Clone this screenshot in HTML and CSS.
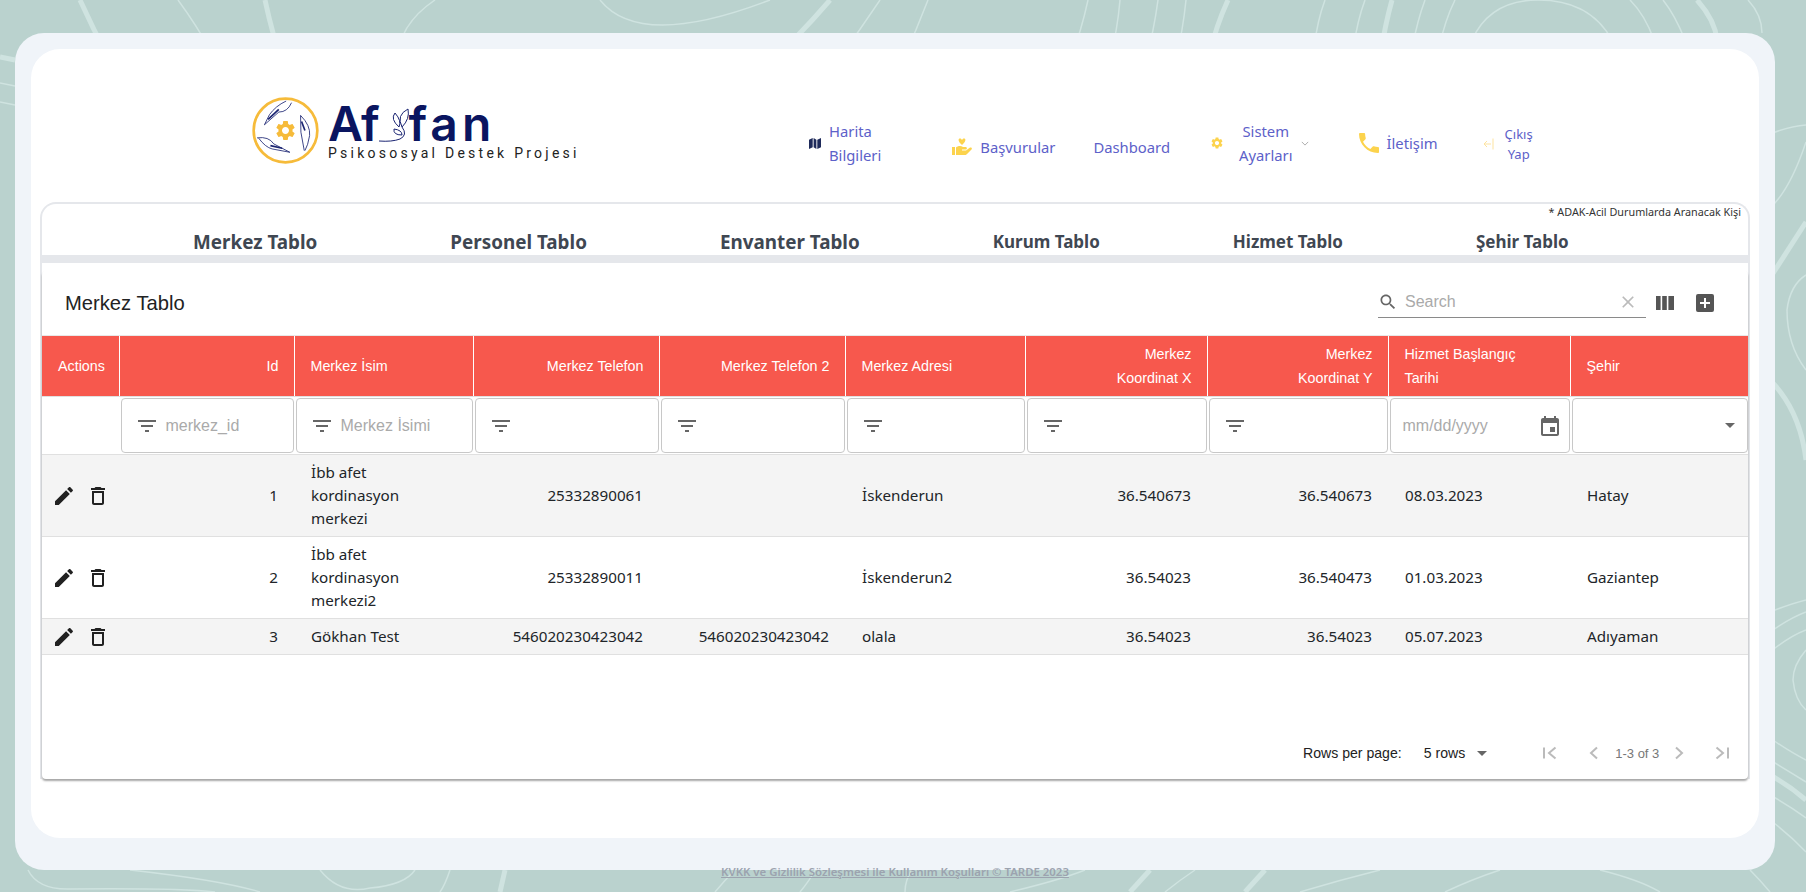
FILE: index.html
```html
<!DOCTYPE html>
<html lang="tr">
<head>
    <meta charset="UTF-8">
    <meta name="viewport" content="width=device-width, initial-scale=1.0">
    <title>Affan - Merkez Tablo</title>
    <link rel="stylesheet" href="styles.css">
</head>
<body>
    <!-- Arka plan çizgileri -->
    <svg class="bg-lines" viewBox="0 0 1806 892" aria-hidden="true">
        <g class="thin">
            <path d="M178 0 Q215 50 238 110"/>
            <path d="M435 0 Q398 25 398 60 Q402 100 440 115"/>
            <path d="M600 0 Q640 50 770 0"/>
            <path d="M795 115 Q840 60 880 0"/>
            <path d="M875 115 Q905 60 928 0"/>
            <path d="M1045 115 Q1075 60 1088 0"/>
            <path d="M1090 115 Q1115 60 1120 0"/>
            <path d="M1127 115 Q1150 60 1158 0"/>
            <path d="M1158 115 Q1180 60 1186 0"/>
            <path d="M1310 115 Q1310 40 1325 0"/>
            <path d="M1348 115 Q1350 40 1365 0"/>
            <path d="M1403 115 Q1410 40 1425 0"/>
            <path d="M1430 115 Q1435 40 1455 0"/>
            <path d="M1472 40 Q1490 0 1538 0 Q1590 0 1612 40"/>
            <path d="M1654 40 Q1645 15 1630 0"/>
            <path d="M1685 40 Q1675 15 1663 0"/>
            <path d="M1762 33 Q1762 15 1748 0"/>
            <path d="M1770 134 Q1790 126 1806 125"/>
            <path d="M1770 208 Q1790 190 1806 142"/>
            <path d="M1806 370 Q1787 345 1787 310 Q1790 285 1806 275"/>
            <path d="M1770 612 Q1790 604 1806 600"/>
            <path d="M1770 632 Q1790 618 1806 612"/>
            <path d="M1770 652 Q1790 636 1806 630"/>
            <path d="M1806 650 Q1793 665 1793 680 Q1795 700 1806 710"/>
            <path d="M1770 738 Q1790 752 1806 760"/>
            <path d="M1770 760 Q1790 772 1806 782"/>
            <path d="M1770 795 Q1790 806 1806 818"/>
            <path d="M1770 820 Q1790 835 1806 852"/>
            <path d="M0 83 L15 86"/>
            <path d="M0 102 L15 105"/>
            <path d="M28 870 Q38 890 70 889 Q180 888 215 892"/>
            <path d="M130 870 Q220 880 260 892"/>
            <path d="M320 870 Q340 895 370 888 Q405 885 415 870"/>
            <path d="M450 870 Q445 885 440 892"/>
            <path d="M715 892 Q725 880 735 870"/>
            <path d="M800 892 Q810 880 815 870"/>
            <path d="M905 892 Q905 880 912 870"/>
            <path d="M1010 892 Q1060 880 1085 870"/>
            <path d="M1165 892 Q1180 880 1195 870"/>
            <path d="M1300 892 Q1340 880 1380 870"/>
            <path d="M1445 892 Q1470 880 1500 870"/>
            <path d="M1600 870 Q1640 880 1660 892"/>
            <path d="M1750 870 Q1760 880 1770 892"/>
        </g>
        <g class="thick">
            <path d="M80 0 Q105 55 140 115"/>
            <path d="M265 0 Q280 70 305 115"/>
            <path d="M830 0 Q770 70 705 115"/>
            <path d="M1228 0 Q1205 50 1200 115"/>
            <path d="M1392 0 Q1378 50 1375 115"/>
            <path d="M1697 0 Q1715 20 1717 40"/>
            <path d="M1770 278 L1806 222"/>
            <path d="M1770 380 Q1800 410 1806 460"/>
            <path d="M1770 775 Q1790 786 1806 800"/>
            <path d="M0 57 L15 60"/>
            <path d="M505 870 L500 892"/>
            <path d="M1130 892 L1150 870"/>
            <path d="M1245 892 L1265 870"/>
        </g>
    </svg>

    <div class="panel">
        <div class="inner">
            <header class="top">
                <div class="logo">
                    <svg class="logo-mark" viewBox="20 25 200 200" aria-hidden="true">
                        <circle cx="120" cy="125" r="95" fill="none" stroke="#f6bb3a" stroke-width="8"/>
                        <g fill="none" stroke="#1a2472" stroke-width="2.5">
                            <path d="M57 108 L72 78 Q90 52 122 37"/>
                            <path d="M57 108 L100 70 Q126 70 138 42"/>
                            <path d="M68 92 L100 62" stroke-width="5"/>
                            <path d="M165 80 Q195 110 192 140 Q187 170 178 185"/>
                            <path d="M165 80 L166 130 L176 185"/>
                            <path d="M168 98 L178 125" stroke-width="5"/>
                            <path d="M35 147 Q70 142 85 165 L133 190"/>
                            <path d="M40 148 Q60 175 80 180 L133 190"/>
                            <path d="M75 170 L110 178" stroke-width="5"/>
                        </g>
                        <svg x="85" y="90" width="70" height="70" viewBox="0 0 24 24">
                            <path class="gear" d="M19.14 12.94c.04-.3.06-.61.06-.94 0-.32-.02-.64-.07-.94l2.03-1.58c.18-.14.23-.41.12-.61l-1.92-3.32c-.12-.22-.37-.29-.59-.22l-2.39.96c-.5-.38-1.03-.7-1.62-.94l-.36-2.54c-.04-.24-.24-.41-.48-.41h-3.84c-.24 0-.43.17-.47.41l-.36 2.54c-.59.24-1.13.57-1.62.94l-2.39-.96c-.22-.08-.47 0-.59.22L2.74 8.87c-.12.21-.08.47.12.61l2.03 1.58c-.05.3-.09.63-.09.94s.02.64.07.94l-2.03 1.58c-.18.14-.23.41-.12.61l1.92 3.32c.12.22.37.29.59.22l2.39-.96c.5.38 1.03.7 1.62.94l.36 2.54c.05.24.24.41.48.41h3.84c.24 0 .44-.17.47-.41l.36-2.54c.59-.24 1.13-.56 1.62-.94l2.39.96c.22.08.47 0 .59-.22l1.92-3.32c.12-.22.07-.47-.12-.61l-2.01-1.58zM12 15.6c-1.98 0-3.6-1.62-3.6-3.6s1.62-3.6 3.6-3.6 3.6 1.62 3.6 3.6-1.62 3.6-3.6 3.6z"/>
                        </svg>
                    </svg>
                    <div class="logo-text">
                        <div class="logo-name"><span class="logo-a">A</span><span class="logo-gap">f</span>fan
                            <svg class="logo-sprout" viewBox="0 0 50 40" aria-hidden="true">
                                <g fill="none" stroke="#1a2472" stroke-width="1">
                                    <path d="M30 6 Q18 12 24 24 Q32 16 30 6Z"/>
                                    <path d="M17 10 Q12 16 21 24 Q24 18 17 10Z"/>
                                    <path d="M16 26 Q15 32 24 32 Q24 27 16 26Z"/>
                                    <path d="M24 24 Q30 32 22 36 Q14 39 1 38"/>
                                </g>
                            </svg>
                        </div>
                        <div class="logo-sub">Psikososyal Destek Projesi</div>
                    </div>
                </div>
                <nav class="nav">
                    <a class="nav-item nav-map">
                        <svg class="ico-map" viewBox="0 0 13 14"><path d="M0 3 L4 1 V11 L0 13Z M5 1 L8 3 V13 L5 11Z M9 3 L13 1 V11 L9 13Z"/></svg>
                        <span>Harita<br>Bilgileri</span>
                    </a>
                    <a class="nav-item single nav-apply">
                        <svg class="ico-hand" viewBox="0 0 20 18"><path d="M9 6 C6 3 6 0.5 8 0.5 C9 0.5 9.6 1.2 10 2 C10.4 1.2 11 0.5 12 0.5 C14 0.5 14 3 11 6 L10 7Z"/><path d="M0 9 H3 V17 H0Z M4 9.5 C6 7.5 9 7.5 11 9 H14 C15.5 9.5 15 11.5 13.5 11.5 H10 V12.5 H14 L18 9.5 C19.5 9 20.5 10.5 19.5 11.5 L15 16 C14.5 17 13 17 12 17 H4Z"/></svg>
                        <span>Başvurular</span>
                    </a>
                    <a class="nav-item single">Dashboard</a>
                    <a class="nav-item nav-system">
                        <svg class="ico-gear" viewBox="0 0 24 24"><path d="M19.14 12.94c.04-.3.06-.61.06-.94 0-.32-.02-.64-.07-.94l2.03-1.58c.18-.14.23-.41.12-.61l-1.92-3.32c-.12-.22-.37-.29-.59-.22l-2.39.96c-.5-.38-1.03-.7-1.62-.94l-.36-2.54c-.04-.24-.24-.41-.48-.41h-3.84c-.24 0-.43.17-.47.41l-.36 2.54c-.59.24-1.13.57-1.62.94l-2.39-.96c-.22-.08-.47 0-.59.22L2.74 8.87c-.12.21-.08.47.12.61l2.03 1.58c-.05.3-.09.63-.09.94s.02.64.07.94l-2.03 1.58c-.18.14-.23.41-.12.61l1.92 3.32c.12.22.37.29.59.22l2.39-.96c.5.38 1.03.7 1.62.94l.36 2.54c.05.24.24.41.48.41h3.84c.24 0 .44-.17.47-.41l.36-2.54c.59-.24 1.13-.56 1.62-.94l2.39.96c.22.08.47 0 .59-.22l1.92-3.32c.12-.22.07-.47-.12-.61l-2.01-1.58zM12 15.6c-1.98 0-3.6-1.62-3.6-3.6s1.62-3.6 3.6-3.6 3.6 1.62 3.6 3.6-1.62 3.6-3.6 3.6z"/></svg>
                        <span class="center">Sistem<br>Ayarları</span>
                        <svg class="ico-chevron" viewBox="0 0 10 6"><path d="M1 1 L5 5 L9 1"/></svg>
                    </a>
                    <a class="nav-item nav-contact">
                        <svg class="ico-phone" viewBox="3 3 18 18"><path d="M6.62 10.79c1.44 2.83 3.76 5.14 6.59 6.59l2.2-2.2c.27-.27.67-.36 1.02-.24 1.12.37 2.33.57 3.57.57.55 0 1 .45 1 1V20c0 .55-.45 1-1 1-9.39 0-17-7.61-17-17 0-.55.45-1 1-1h3.5c.55 0 1 .45 1 1 0 1.25.2 2.45.57 3.57.11.35.03.74-.25 1.02l-2.2 2.2z"/></svg>
                        <span>İletişim</span>
                    </a>
                    <a class="nav-item nav-exit">
                        <svg class="ico-exit" viewBox="0 0 11 12"><path d="M10 0.5 V11.5 M8 6 H1 M4 3 L1 6 L4 9"/></svg>
                        <span class="center">Çıkış<br>Yap</span>
                    </a>
                </nav>
            </header>

            <section class="card">
                <div class="note">* ADAK-Acil Durumlarda Aranacak Kişi</div>
                <div class="tabs">
                    <a class="tab">Merkez Tablo</a>
                    <a class="tab">Personel Tablo</a>
                    <a class="tab">Envanter Tablo</a>
                    <a class="tab tab-small">Kurum Tablo</a>
                    <a class="tab tab-small">Hizmet Tablo</a>
                    <a class="tab tab-small">Şehir Tablo</a>
                </div>
                <div class="tabs-bar"></div>

                <div class="paper">
                    <div class="toolbar">
                        <h2 class="toolbar-title">Merkez Tablo</h2>
                        <div class="search">
                            <svg class="ico-search" viewBox="0 0 24 24"><path d="M15.5 14h-.79l-.28-.27C15.41 12.59 16 11.11 16 9.5 16 5.91 13.09 3 9.5 3S3 5.91 3 9.5 5.91 16 9.5 16c1.61 0 3.09-.59 4.23-1.57l.27.28v.79l5 4.99L20.49 19l-4.99-5zm-6 0C7.01 14 5 11.99 5 9.5S7.01 5 9.5 5 14 7.01 14 9.5 11.99 14 9.5 14z"/></svg>
                            <span class="search-text">Search</span>
                            <svg class="ico-clear" viewBox="0 0 24 24"><path d="M19 6.41L17.59 5 12 10.59 6.41 5 5 6.41 10.59 12 5 17.59 6.41 19 12 13.41 17.59 19 19 17.59 13.41 12z"/></svg>
                        </div>
                        <svg class="ico-columns" viewBox="0 0 18 14"><path d="M0 0h4.6v14H0zM6.2 0h4.6v14H6.2zM12.4 0H18v14h-5.6z"/></svg>
                        <svg class="ico-add" viewBox="0 0 18 18"><path fill-rule="evenodd" d="M2 0h14a2 2 0 0 1 2 2v14a2 2 0 0 1-2 2H2a2 2 0 0 1-2-2V2a2 2 0 0 1 2-2zM8 4v4H4v2h4v4h2v-4h4V8h-4V4z"/></svg>
                    </div>

                    <table class="grid">
                        <colgroup>
                            <col class="c-actions"><col class="c-id"><col class="c-name"><col class="c-tel"><col class="c-tel">
                            <col class="c-addr"><col class="c-x"><col class="c-y"><col class="c-date"><col>
                        </colgroup>
                        <thead>
                            <tr class="head-row">
                                <th>Actions</th>
                                <th class="num">Id</th>
                                <th>Merkez İsim</th>
                                <th class="num">Merkez Telefon</th>
                                <th class="num">Merkez Telefon 2</th>
                                <th>Merkez Adresi</th>
                                <th class="num">Merkez<br>Koordinat X</th>
                                <th class="num">Merkez<br>Koordinat Y</th>
                                <th>Hizmet Başlangıç<br>Tarihi</th>
                                <th>Şehir</th>
                            </tr>
                            <tr class="filter-row">
                                <td></td>
                                <td><div class="filter"><svg class="ico-filter" viewBox="0 0 18 12"><path d="M0 0h18v2H0zM3 5h12v2H3zM7 10h4v2H7z"/></svg><span>merkez_id</span></div></td>
                                <td><div class="filter"><svg class="ico-filter" viewBox="0 0 18 12"><path d="M0 0h18v2H0zM3 5h12v2H3zM7 10h4v2H7z"/></svg><span>Merkez İsimi</span></div></td>
                                <td><div class="filter"><svg class="ico-filter" viewBox="0 0 18 12"><path d="M0 0h18v2H0zM3 5h12v2H3zM7 10h4v2H7z"/></svg></div></td>
                                <td><div class="filter"><svg class="ico-filter" viewBox="0 0 18 12"><path d="M0 0h18v2H0zM3 5h12v2H3zM7 10h4v2H7z"/></svg></div></td>
                                <td><div class="filter"><svg class="ico-filter" viewBox="0 0 18 12"><path d="M0 0h18v2H0zM3 5h12v2H3zM7 10h4v2H7z"/></svg></div></td>
                                <td><div class="filter"><svg class="ico-filter" viewBox="0 0 18 12"><path d="M0 0h18v2H0zM3 5h12v2H3zM7 10h4v2H7z"/></svg></div></td>
                                <td><div class="filter"><svg class="ico-filter" viewBox="0 0 18 12"><path d="M0 0h18v2H0zM3 5h12v2H3zM7 10h4v2H7z"/></svg></div></td>
                                <td><div class="filter date"><span>mm/dd/yyyy</span><svg class="ico-date" viewBox="3 1 18 20"><path d="M17 12h-5v5h5v-5zM16 1v2H8V1H6v2H5c-1.11 0-1.99.9-1.99 2L3 19c0 1.1.89 2 2 2h14c1.1 0 2-.9 2-2V5c0-1.1-.9-2-2-2h-1V1h-2zm3 18H5V8h14v11z"/></svg></div></td>
                                <td><div class="filter select"><i class="caret"></i></div></td>
                            </tr>
                        </thead>
                        <tbody>
                            <tr class="odd">
                                <td><div class="acts"><svg class="ico-edit" viewBox="0 0 24 24"><path d="M3 17.25V21h3.75L17.81 9.94l-3.75-3.75L3 17.25zM20.71 7.04c.39-.39.39-1.02 0-1.41l-2.34-2.34c-.39-.39-1.02-.39-1.41 0l-1.83 1.83 3.75 3.75 1.83-1.83z"/></svg><svg class="ico-trash" viewBox="0 0 24 24"><path d="M6 19c0 1.1.9 2 2 2h8c1.1 0 2-.9 2-2V7H6v12zM8 9h8v10H8V9zm7.5-5l-1-1h-5l-1 1H5v2h14V4z"/></svg></div></td>
                                <td class="num">1</td>
                                <td>İbb afet<br>kordinasyon<br>merkezi</td>
                                <td class="num">25332890061</td>
                                <td class="num"></td>
                                <td>İskenderun</td>
                                <td class="num">36.540673</td>
                                <td class="num">36.540673</td>
                                <td>08.03.2023</td>
                                <td>Hatay</td>
                            </tr>
                            <tr>
                                <td><div class="acts"><svg class="ico-edit" viewBox="0 0 24 24"><path d="M3 17.25V21h3.75L17.81 9.94l-3.75-3.75L3 17.25zM20.71 7.04c.39-.39.39-1.02 0-1.41l-2.34-2.34c-.39-.39-1.02-.39-1.41 0l-1.83 1.83 3.75 3.75 1.83-1.83z"/></svg><svg class="ico-trash" viewBox="0 0 24 24"><path d="M6 19c0 1.1.9 2 2 2h8c1.1 0 2-.9 2-2V7H6v12zM8 9h8v10H8V9zm7.5-5l-1-1h-5l-1 1H5v2h14V4z"/></svg></div></td>
                                <td class="num">2</td>
                                <td>İbb afet<br>kordinasyon<br>merkezi2</td>
                                <td class="num">25332890011</td>
                                <td class="num"></td>
                                <td>İskenderun2</td>
                                <td class="num">36.54023</td>
                                <td class="num">36.540473</td>
                                <td>01.03.2023</td>
                                <td>Gaziantep</td>
                            </tr>
                            <tr class="odd">
                                <td><div class="acts"><svg class="ico-edit" viewBox="0 0 24 24"><path d="M3 17.25V21h3.75L17.81 9.94l-3.75-3.75L3 17.25zM20.71 7.04c.39-.39.39-1.02 0-1.41l-2.34-2.34c-.39-.39-1.02-.39-1.41 0l-1.83 1.83 3.75 3.75 1.83-1.83z"/></svg><svg class="ico-trash" viewBox="0 0 24 24"><path d="M6 19c0 1.1.9 2 2 2h8c1.1 0 2-.9 2-2V7H6v12zM8 9h8v10H8V9zm7.5-5l-1-1h-5l-1 1H5v2h14V4z"/></svg></div></td>
                                <td class="num">3</td>
                                <td>Gökhan Test</td>
                                <td class="num">546020230423042</td>
                                <td class="num">546020230423042</td>
                                <td>olala</td>
                                <td class="num">36.54023</td>
                                <td class="num">36.54023</td>
                                <td>05.07.2023</td>
                                <td>Adıyaman</td>
                            </tr>
                        </tbody>
                    </table>

                    <div class="pager">
                        <span class="pager-label">Rows per page:</span>
                        <span class="pager-rows">5 rows</span>
                        <i class="caret"></i>
                        <svg class="ico-page first" viewBox="0 0 14 14"><path d="M1 1.5 V12.5 M12.5 1.5 L6 7 L12.5 12.5"/></svg>
                        <svg class="ico-page prev" viewBox="0 0 10 14"><path d="M8 1.5 L2 7 L8 12.5"/></svg>
                        <span class="pager-count">1-3 of 3</span>
                        <svg class="ico-page next" viewBox="0 0 10 14"><path d="M2 1.5 L8 7 L2 12.5"/></svg>
                        <svg class="ico-page last" viewBox="0 0 14 14"><path d="M1.5 1.5 L8 7 L1.5 12.5 M13 1.5 V12.5"/></svg>
                    </div>
                </div>
            </section>
        </div>
    </div>
    <footer class="foot"><a>KVKK ve Gizlilik Sözleşmesi ile Kullanım Koşulları © TARDE 2023</a></footer>
</body>
</html>
```

FILE: styles.css
```css
html, body {
    height: 100%;
}
body {
    margin: 0;
    background-color: #bad2ce;
    font-family: "Noto Sans", Arial, sans-serif;
    color: #212529;
    overflow: hidden;
    position: relative;
}
.bg-lines {
    position: absolute;
    left: 0;
    top: 0;
    width: 1806px;
    height: 892px;
}
.bg-lines path {
    fill: none;
    stroke: #cfe3e0;
}
.bg-lines .thin path {
    stroke-width: 1.5;
}
.bg-lines .thick path {
    stroke-width: 5;
}

/* Ana panel */
.panel {
    position: relative;
    box-sizing: border-box;
    width: 1760px;
    height: 837px;
    margin: 33px 0 0 15px;
    padding: 16px 16px 32px;
    background-color: #f0f4f9;
    border-radius: 29px;
}
.inner {
    height: 100%;
    padding: 0 9px;
    box-sizing: border-box;
    background-color: #fff;
    border-radius: 29px;
}

/* Üst kısım */
.top {
    display: flex;
    align-items: flex-start;
    height: 153px;
}
.logo {
    display: flex;
    align-items: center;
    gap: 9px;
    margin: 48px 0 0 212px;
    width: 360px;
}
.logo-mark {
    width: 67px;
    height: 67px;
}
.gear {
    fill: #f6bb3a;
    fill-rule: evenodd;
}
.logo-text {
    display: flex;
    flex-direction: column;
}
.logo-name {
    position: relative;
    font-family: Inter, sans-serif;
    font-size: 48px;
    font-weight: 600;
    line-height: 46px;
    letter-spacing: 4px;
    color: #0a1560;
    height: 44px;
}
.logo-a {
    letter-spacing: -2px;
}
.logo-gap {
    margin-right: 25px;
}
.logo-sprout {
    position: absolute;
    left: 50px;
    top: 2px;
    width: 50px;
    height: 40px;
}
.logo-sub {
    font-family: Roboto, sans-serif;
    font-size: 14px;
    line-height: 16px;
    letter-spacing: 3.25px;
    color: #222;
    white-space: nowrap;
}
.nav {
    display: flex;
    align-items: center;
    gap: 40px;
    margin: 70px 0 0 197px;
    font-size: 14.8px;
    line-height: 24px;
    color: #5d61c9;
}
.nav-item {
    display: flex;
    align-items: center;
    gap: 8px;
    white-space: nowrap;
}
.nav-map {
    margin-right: 31px;
}
.nav-apply {
    margin-right: -2px;
}
.nav-system {
    margin-right: 10px;
}
.nav-contact {
    margin-right: 5px;
}
.nav-item .center {
    text-align: center;
}
.single {
    padding-top: 8px;
}
.nav-exit {
    font-size: 13px;
    line-height: 20px;
    gap: 11px;
    padding-top: 2px;
}
.ico-map {
    width: 12px;
    height: 13px;
    fill: #1e2a5a;
}
.ico-hand {
    width: 20px;
    height: 18px;
    fill: #fcd34d;
}
.ico-gear {
    width: 14px;
    height: 14px;
    fill: #fcd34d;
    fill-rule: evenodd;
    margin-right: 7px;
}
.ico-chevron {
    width: 8px;
    height: 5px;
    fill: none;
    stroke: #9a9a9a;
    stroke-width: 1;
}
.ico-phone {
    width: 20px;
    height: 20px;
    fill: #fcd34d;
}
.ico-exit {
    width: 11px;
    height: 12px;
    fill: none;
    stroke: #fde3a0;
    stroke-width: 1;
}

/* Tablo kartı */
.card {
    position: relative;
    height: 577px;
    box-sizing: border-box;
    border: 2px solid #e5e7eb;
    border-bottom: none;
    border-radius: 16px 16px 0 0;
}
.note {
    position: absolute;
    right: 7px;
    top: 0;
    font-size: 10.8px;
    line-height: 16px;
    color: #333;
}
.tabs {
    display: flex;
    gap: 133px;
    height: 51px;
    padding: 26px 0 0 151px;
    box-sizing: border-box;
    font-size: 18.85px;
    font-weight: 700;
    line-height: 24px;
    color: #3f4752;
    white-space: nowrap;
}
.tab-small {
    font-size: 17px;
}
.tabs-bar {
    height: 8px;
    background-color: #e5e7eb;
}
.paper {
    margin-top: 8px;
    height: 508px;
    display: flex;
    flex-direction: column;
    background-color: #fff;
    border-radius: 4px;
    box-shadow: 0 2px 2px rgba(0, 0, 0, 0.35);
    font-family: "Liberation Sans", Arial, sans-serif;
}

/* Araç çubuğu */
.toolbar {
    display: flex;
    align-items: center;
    height: 64px;
    padding: 0 34px 0 23px;
    box-sizing: border-box;
}
.toolbar-title {
    flex: 1;
    margin: 0;
    font-size: 20.2px;
    font-weight: 400;
    color: #222;
}
.search {
    display: flex;
    align-items: center;
    width: 268px;
    height: 33px;
    margin: -3px 10px 0 0;
    padding-top: 2px;
    box-sizing: border-box;
    border-bottom: 1px solid #8a8a8a;
    font-size: 16px;
    color: #aaa;
}
.ico-search {
    width: 20px;
    height: 20px;
    margin-right: 7px;
    fill: #666;
}
.search-text {
    flex: 1;
}
.ico-clear {
    width: 20px;
    height: 20px;
    margin-right: 8px;
    fill: #bbb;
}
.ico-columns {
    width: 18px;
    height: 14px;
    fill: #555;
}
.ico-add {
    width: 18px;
    height: 18px;
    margin-left: 22px;
    fill: #555;
}

/* Tablo */
.grid {
    width: 100%;
    table-layout: fixed;
    border-collapse: collapse;
    font-family: "Noto Sans", Arial, sans-serif;
    font-size: 15.2px;
    line-height: 23px;
    color: #212529;
}
.c-actions { width: 77px; }
.c-id { width: 175px; }
.c-name { width: 179px; }
.c-tel { width: 186px; }
.c-addr { width: 180px; }
.c-x { width: 182px; }
.c-y { width: 181px; }
.c-date { width: 182px; }
.grid th {
    height: 61px;
    padding: 0 15px 0 16px;
    box-sizing: border-box;
    background-color: #f7584d;
    border-top: 1px solid #e8e8e8;
    border-left: 1px solid #fff;
    border-bottom: 1px solid #e0e0e0;
    font-family: "Liberation Sans", Arial, sans-serif;
    font-size: 14.3px;
    font-weight: 400;
    line-height: 24px;
    color: #fff;
    text-align: left;
}
.grid th:first-child {
    border-left: none;
}
.grid .num {
    text-align: right;
}
.grid td {
    padding: 6px 16px 6px 17px;
    border-bottom: 1px solid #e0e0e0;
}
.odd td {
    background-color: #f4f4f4;
}
.grid .filter-row td {
    padding: 1px 0.5px 1px 1.5px;
}
.filter {
    display: flex;
    align-items: center;
    gap: 10px;
    height: 55px;
    padding: 0 16px;
    box-sizing: border-box;
    border: 1px solid #c8c8c8;
    border-radius: 4px;
    font-family: "Liberation Sans", Arial, sans-serif;
    font-size: 16px;
    color: #aaa;
    white-space: nowrap;
}
.ico-filter {
    flex: none;
    width: 18px;
    height: 12px;
    fill: #666;
}
.date {
    justify-content: space-between;
    padding: 0 10px 0 12px;
}
.ico-date {
    flex: none;
    width: 18px;
    height: 20px;
    fill: #666;
}
.select {
    justify-content: flex-end;
    padding-right: 12px;
}
.caret {
    display: inline-block;
    border-top: 5px solid #666;
    border-left: 5px solid transparent;
    border-right: 5px solid transparent;
}
.acts {
    display: flex;
    align-items: center;
    gap: 10px;
    margin: 0 0 0 -7px;
    height: 23px;
}
.acts svg {
    flex: none;
    fill: #212121;
}
.ico-edit {
    width: 24px;
    height: 24px;
}
.ico-trash {
    width: 24px;
    height: 24px;
}

/* Sayfalama */
.pager {
    display: flex;
    align-items: center;
    margin-top: auto;
    height: 52px;
    padding: 0 0 0 1261px;
    font-size: 14.1px;
    color: #222;
    white-space: nowrap;
}
.pager-rows {
    margin-left: 22px;
}
.pager .caret {
    margin-left: 12px;
}
.ico-page {
    height: 14px;
    fill: none;
    stroke: #bbb;
    stroke-width: 2;
}
.first {
    width: 14px;
    margin-left: 56px;
}
.prev {
    width: 10px;
    margin-left: 32px;
}
.pager-count {
    margin-left: 16px;
    font-size: 13px;
    color: #777;
}
.next {
    width: 10px;
    margin-left: 15px;
}
.last {
    width: 14px;
    margin-left: 31px;
}

/* Alt yazı */
.foot {
    position: relative;
    width: 1790px;
    margin-top: -7px;
    text-align: center;
    font-size: 11.4px;
    font-weight: 600;
    line-height: 18px;
    color: #9ca3af;
}
.foot a {
    text-decoration: underline;
}
```
